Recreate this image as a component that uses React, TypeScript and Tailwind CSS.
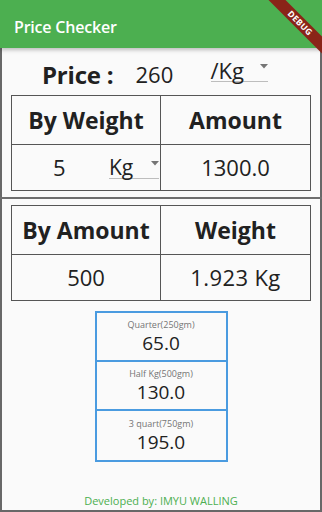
import React from 'react';

function Caret() {
  return (
    <svg width="8" height="5" viewBox="0 0 8 5" className="shrink-0">
      <path d="M0 0 L8 0 L4 4.5 Z" fill="#757575" />
    </svg>
  );
}

function Dropdown({ label, className }: { label: string; className: string }) {
  return (
    <div className={`flex items-end justify-between border-b border-[#bdbdbd] ${className}`}>
      <span className="leading-none">{label}</span>
      <span className="mb-[12px]">
        <Caret />
      </span>
    </div>
  );
}

const boxes = [
  { label: 'Quarter(250gm)', value: '65.0' },
  { label: 'Half Kg(500gm)', value: '130.0' },
  { label: '3 quart(750gm)', value: '195.0' },
];

export default function App() {
  return (
    <div className="relative w-[322px] h-[512px] overflow-hidden bg-[#fafafa] flex flex-col font-['Open_Sans','Noto_Sans',sans-serif] text-[#212121]">
      {/* App bar */}
      <header className="relative z-10 h-12 shrink-0 bg-[#4caf50] flex items-center px-[14px] pt-[6px] shadow-[0_2px_4px_rgba(0,0,0,0.25)]">
        <h1 className="text-white text-[16px] font-semibold tracking-[-0.2px]">Price Checker</h1>
      </header>

      {/* Debug ribbon */}
      <div className="absolute z-20 top-[17px] right-[-28px] w-[100px] h-[12px] rotate-45 bg-[#8a2418] flex items-center justify-center">
        <span className="text-white text-[8.5px] font-bold leading-none tracking-[0.3px]">DEBUG</span>
      </div>

      <div className="flex-1 flex flex-col border-x-2 border-b-2 border-[#686868]">
        {/* Price row */}
        <div className="h-[47px] flex items-center pl-[40px] pt-[6px]">
          <span className="text-[24px] font-bold tracking-[-0.2px]">Price :</span>
          <div className="w-[84px] pl-[22px] text-[22px]">260</div>
          <Dropdown label="/Kg" className="ml-[13px] mb-[11px] w-[57px] h-[26px] text-[22px]" />
        </div>

        {/* By weight table */}
        <div className="mx-[9px] grid grid-cols-2 border border-[#555]">
          <div className="h-[49px] flex items-center justify-center border-r border-b border-[#555] text-[23px] font-bold">
            By Weight
          </div>
          <div className="h-[49px] flex items-center justify-center border-b border-[#555] text-[23px] font-bold">
            Amount
          </div>
          <div className="h-[45px] flex items-center border-r border-[#555] pl-[41px]">
            <span className="w-[56px] text-[22px]">5</span>
            <Dropdown label="Kg" className="mb-[4px] w-[50px] h-[27px] text-[21px]" />
          </div>
          <div className="h-[45px] flex items-center justify-center text-[22px]">1300.0</div>
        </div>

        <div className="h-[6px]" />
        <div className="h-[2px] bg-[#6e6e6e] -mx-[2px]" />
        <div className="h-[6px]" />

        {/* By amount table */}
        <div className="mx-[9px] grid grid-cols-2 border border-[#555]">
          <div className="h-[49px] flex items-center justify-center border-r border-b border-[#555] text-[23px] font-bold">
            By Amount
          </div>
          <div className="h-[49px] flex items-center justify-center border-b border-[#555] text-[23px] font-bold">
            Weight
          </div>
          <div className="h-[45px] flex items-center justify-center border-r border-[#555] text-[22px]">500</div>
          <div className="h-[45px] flex items-center justify-center text-[22px] tracking-[0.4px]">1.923 Kg</div>
        </div>

        {/* Portions */}
        <div className="mt-[10px] mx-auto w-[133px] border-2 border-[#4a9be0] divide-y-2 divide-[#4a9be0]">
          {boxes.map((b) => (
            <div key={b.label} className="h-[49px] flex flex-col items-center justify-center">
              <span className="text-[9px] text-[#757575] leading-[12px]">{b.label}</span>
              <span className="text-[19px] leading-[24px]">{b.value}</span>
            </div>
          ))}
        </div>

        <div className="mt-auto pb-[1px] text-center text-[11px] text-[#4caf50]">Developed by: IMYU WALLING</div>
      </div>
    </div>
  );
}
